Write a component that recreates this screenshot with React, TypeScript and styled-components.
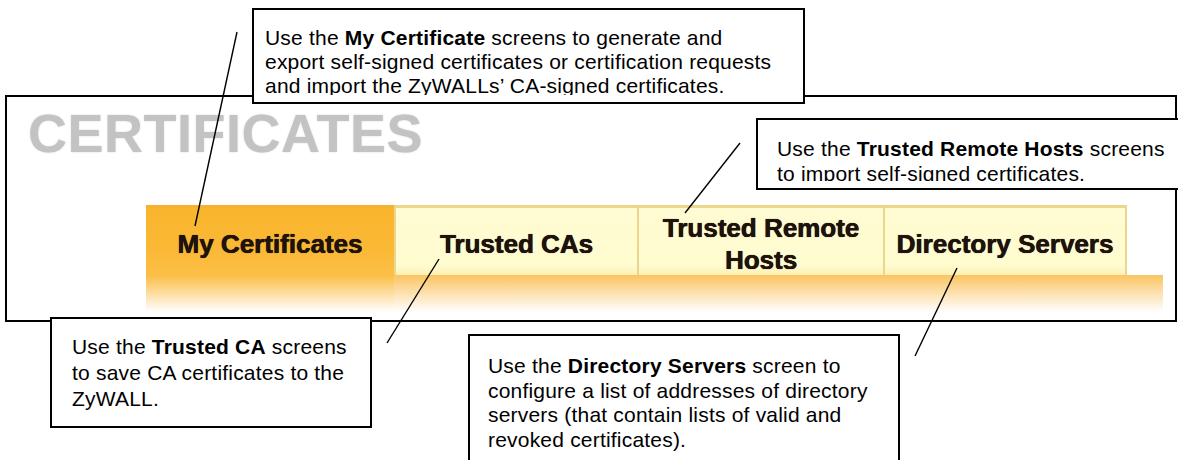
import React from "react";
import styled, { createGlobalStyle } from "styled-components";

const GlobalStyle = createGlobalStyle`
  html, body { margin: 0; padding: 0; background: #fff; }
  body { font-family: "Liberation Sans", Arial, sans-serif; }
`;

const Page = styled.div`
  position: relative;
  width: 1178px;
  height: 460px;
  overflow: hidden;
  box-sizing: border-box;
  padding: 95px 0 0 5px;
  background: #fff;
`;

const Frame = styled.div`
  width: 1172px;
  height: 227px;
  box-sizing: border-box;
  border: 2px solid #000;
  background: #fff;
  display: flex;
  flex-direction: column;
`;

const Heading = styled.h1`
  margin: 9px 0 0 21px;
  font: bold 54px/54px "Liberation Sans", Arial, sans-serif;
  color: #c3c3c3;
  text-shadow: 0 0 2px #d6d6d6;
  letter-spacing: 0.5px;
`;

const TabBar = styled.div`
  margin: 45px 0 0 139px;
  width: 1017px;
  display: flex;
  flex-direction: column;
`;

const TabRow = styled.div`
  display: flex;
  height: 70px;
`;

const Tab = styled.div<{ $w: number; $active?: boolean; $last?: boolean }>`
  width: ${(p) => p.$w}px;
  box-sizing: border-box;
  display: flex;
  align-items: center;
  justify-content: center;
  text-align: center;
  padding-top: 4px;
  font: bold 26px/32px "Liberation Sans", Arial, sans-serif;
  color: #1f120c;
  text-shadow: 0 0 0.8px #2a1a10, 0.3px 0 0 #2a1a10;
  background: ${(p) =>
    p.$active
      ? "linear-gradient(#f9b52c, #fbb836 60%, #fcbf47)"
      : "linear-gradient(#fffbd2, #fffcd0 85%, #fcefb4)"};
  border-top: 3px solid ${(p) => (p.$active ? "#f6b12e" : "#ecd889")};
  border-left: ${(p) => (p.$active ? "none" : "2px solid #ead68c")};
  border-right: ${(p) => (p.$last ? "2px solid #ead68c" : "none")};
`;

const Underbar = styled.div`
  height: 37px;
  background:
    linear-gradient(rgba(255, 255, 255, 0) 0%, rgba(255, 255, 255, 0.55) 55%, #fff 100%),
    linear-gradient(90deg, #fbbd45 0, #fbbd45 248px, #fac462 248px, #fac462 100%);
`;

const Callout = styled.div<{
  $x: number;
  $y: number;
  $w: number;
  $h: number;
  $pl: number;
  $pt: number;
}>`
  position: absolute;
  left: ${(p) => p.$x}px;
  top: ${(p) => p.$y}px;
  width: ${(p) => p.$w}px;
  height: ${(p) => p.$h}px;
  box-sizing: border-box;
  border: 2px solid #000;
  background: #fff;
  overflow: hidden;
  padding: ${(p) => p.$pt}px 0 0 ${(p) => p.$pl}px;
  z-index: 2;
`;

const CalloutText = styled.div<{ $lh: number; $clip?: number }>`
  font-family: "Liberation Sans", Arial, sans-serif;
  font-size: 21px;
  line-height: ${(p) => p.$lh}px;
  letter-spacing: 0.2px;
  color: #000;
  white-space: nowrap;
  ${(p) => (p.$clip ? `height: ${p.$clip}px; overflow: hidden;` : "")}
`;

const Leaders = styled.svg`
  position: absolute;
  left: 0;
  top: 0;
  z-index: 3;
  pointer-events: none;
`;

export default function App() {
  return (
    <>
      <GlobalStyle />
      <Page>
        <Frame>
          <Heading>CERTIFICATES</Heading>
          <TabBar>
            <TabRow>
              <Tab $w={248} $active>
                My Certificates
              </Tab>
              <Tab $w={243}>Trusted CAs</Tab>
              <Tab $w={246}>
                Trusted Remote
                <br />
                Hosts
              </Tab>
              <Tab $w={244} $last>
                Directory Servers
              </Tab>
            </TabRow>
            <Underbar />
          </TabBar>
        </Frame>

        <Callout $x={252} $y={8} $w={553} $h={96} $pl={11} $pt={16}>
          <CalloutText $lh={24} $clip={69}>
            Use the <b>My Certificate</b> screens to generate and
            <br />
            export self-signed certificates or certification requests
            <br />
            and import the ZyWALLs’ CA-signed certificates.
          </CalloutText>
        </Callout>

        <Callout $x={756} $y={118} $w={440} $h={72} $pl={19} $pt={16}>
          <CalloutText $lh={25} $clip={45}>
            Use the <b>Trusted Remote Hosts</b> screens
            <br />
            to import self-signed certificates.
          </CalloutText>
        </Callout>

        <Callout $x={50} $y={317} $w={322} $h={111} $pl={20} $pt={15}>
          <CalloutText $lh={26}>
            Use the <b>Trusted CA</b> screens
            <br />
            to save CA certificates to the
            <br />
            ZyWALL.
          </CalloutText>
        </Callout>

        <Callout $x={468} $y={334} $w={432} $h={140} $pl={18} $pt={18}>
          <CalloutText $lh={24.5}>
            Use the <b>Directory Servers</b> screen to
            <br />
            configure a list of addresses of directory
            <br />
            servers (that contain lists of valid and
            <br />
            revoked certificates).
          </CalloutText>
        </Callout>

        <Leaders width="1178" height="460" viewBox="0 0 1178 460">
          <g stroke="#000" strokeWidth="1.4" fill="none">
            <line x1="237" y1="32" x2="195" y2="226" />
            <line x1="439" y1="259" x2="387" y2="343" />
            <line x1="740" y1="143" x2="685" y2="213" />
            <line x1="957" y1="268" x2="915" y2="356" />
          </g>
        </Leaders>
      </Page>
    </>
  );
}
